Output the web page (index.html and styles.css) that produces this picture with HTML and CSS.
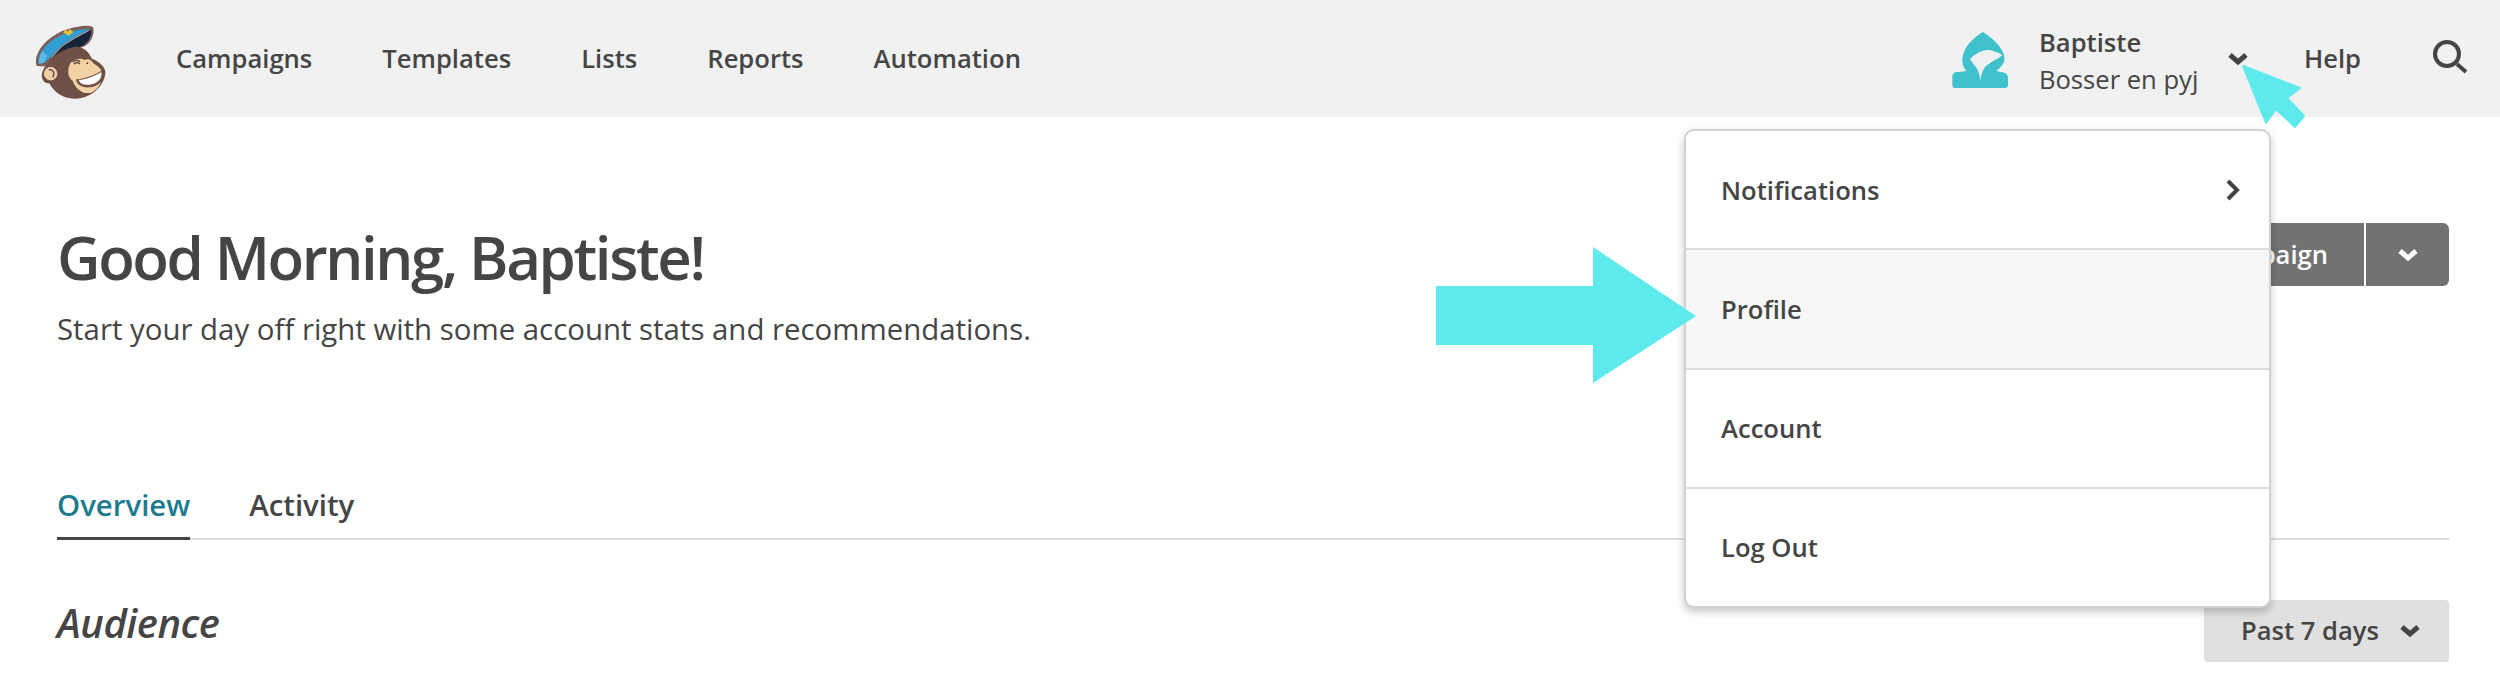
FILE: index.html
```html
<!DOCTYPE html>
<html lang="en">
<head>
<meta charset="utf-8">
<title>Mailchimp dashboard</title>
<link rel="stylesheet" href="styles.css">
</head>
<body>
<header class="topbar">
  <svg class="logo" viewBox="0 0 255 255" aria-label="Freddie logo">
    <path class="hat-edge" d="M20 138C8 100 50 50 105 30C140 18 180 12 190 22C194 50 180 76 150 84L60 140Z"/>
    <path class="hat-blue" d="M27 132C18 100 58 58 108 39C130 32 150 28 180 27L130 53L95 76L62 110L46 126Z"/>
    <path class="hat-light" d="M27 132C24 118 30 105 37 93L52 107L42 128Z"/>
    <path class="hat-dark" d="M62 120L96 80L132 57L184 29C186 50 174 68 156 78L90 108Z"/>
    <path class="hat-line" d="M64 112L96 78L132 55L176 32"/>
    <path class="hat-badge" d="M100 38L106 28L113 35L119 27L130 36L116 47L108 41Z"/>
    <path class="head" d="M50 134C66 106 106 82 140 80C164 80 178 100 186 116C206 124 226 140 226 156C226 190 190 236 134 236C98 236 72 216 58 190C34 190 26 160 50 134Z"/>
    <circle class="ear-cream" cx="62" cy="161" r="19"/>
    <path class="ear-line" d="M56 150C70 146 76 160 68 172"/>
    <path class="face" d="M120 132C128 116 150 112 164 120C176 114 186 122 190 130C202 138 214 146 214 154C218 176 212 206 184 218C158 224 136 206 128 182C112 174 112 146 120 132Z"/>
    <path class="eye" d="M128 126C134 118 146 120 150 126M132 132C138 126 146 128 150 132"/>
    <circle class="nose" cx="172" cy="130" r="3"/>
    <path class="mouth-edge" d="M138 178C160 178 200 164 222 146C228 176 210 198 180 202C158 204 140 196 138 178Z"/>
    <path class="teeth" d="M146 180C170 178 196 168 214 156C218 174 204 190 180 194C164 196 150 192 146 180Z"/>
  </svg>
  <nav class="mainnav">
    <a class="navlink">Campaigns</a>
    <a class="navlink">Templates</a>
    <a class="navlink">Lists</a>
    <a class="navlink">Reports</a>
    <a class="navlink">Automation</a>
  </nav>
  <svg class="hood" viewBox="0 0 240 225" aria-hidden="true">
    <path class="hood-fill" fill-rule="evenodd" d="M132 30C150 42 172 58 186 80C200 102 204 124 172 146C182 150 190 150 196 152C204 154 207 160 207 168L207 190C207 195 203 198 198 198L48 198C43 198 40 195 40 190L40 164C40 156 45 151 52 150C60 149 70 150 82 146C66 130 68 108 76 88C86 62 112 42 132 30ZM93 112C104 98 122 88 142 84C158 84 178 90 190 100C178 110 158 118 146 128C132 138 126 156 125 178C122 156 116 140 106 130C102 124 97 118 93 112Z"/>
  </svg>
  <div class="account">
    <span class="account-name">Baptiste</span>
    <span class="account-org">Bosser en pyj</span>
  </div>
  <svg class="account-chevron" viewBox="0 0 24 24" aria-hidden="true"><path d="M4 8L12 15L20 8"/></svg>
  <a class="navlink help">Help</a>
  <svg class="search" viewBox="0 0 70 60" aria-label="Search"><circle cx="47" cy="25" r="12"/><path d="M57 35L66 43"/></svg>
</header>

<main class="content">
  <section class="hero">
    <div>
      <h1 class="title">Good Morning, Baptiste!</h1>
      <p class="subtitle">Start your day off right with some account stats and recommendations.</p>
    </div>
    <div class="split">
      <button class="split-main">Create Campaign</button>
      <button class="split-caret"><svg class="white-chevron" viewBox="0 0 24 24" aria-hidden="true"><path d="M4 8L12 15L20 8"/></svg></button>
    </div>
  </section>
  <div class="tabs">
    <a class="tab tab-active">Overview</a>
    <a class="tab">Activity</a>
  </div>
  <section class="audience">
    <h2 class="audience-title">Audience</h2>
    <button class="range">Past 7 days<svg class="range-chevron" viewBox="0 0 24 24" aria-hidden="true"><path d="M4 8L12 15L20 8"/></svg></button>
  </section>
</main>

<div class="menu">
  <a class="menu-item">Notifications<svg class="menu-chevron" viewBox="0 0 14 22" aria-hidden="true"><path d="M2 2L11 11L2 20"/></svg></a>
  <a class="menu-item menu-item-hover">Profile</a>
  <a class="menu-item">Account</a>
  <a class="menu-item">Log Out</a>
</div>

<svg class="big-arrow" viewBox="0 0 260 136" aria-hidden="true"><path d="M0 39H157V0L260 69L157 136V98H0Z"/></svg>
<svg class="cursor" viewBox="0 0 110 100" aria-hidden="true"><path d="M33 36L90 58L77 68L94 86L85 97L66 79L56 93Z" stroke-linejoin="round"/></svg>
</body>
</html>
```
FILE: styles.css
```css
* { box-sizing: border-box; }
html, body { margin: 0; padding: 0; }
body {
  width: 2500px;
  height: 679px;
  overflow: hidden;
  position: relative;
  background: #fff;
  color: #454545;
  font-family: "Open Sans", "Liberation Sans", sans-serif;
}
.topbar {
  display: flex;
  align-items: center;
  height: 117px;
  padding: 0 30px;
  background: #f1f1f1;
}
.logo { width: 85px; height: 85px; flex: none; margin-top: 8px; }
.hat-edge { fill: #7d5f55; }
.hat-blue { fill: #2f9fd6; }
.hat-light { fill: #5cb8e4; }
.hat-dark { fill: #16263a; }
.hat-line { fill: none; stroke: #c8d4dc; stroke-width: 2; }
.hat-badge { fill: #f0c030; }
.head { fill: #6e5046; }
.ear-cream { fill: #f0cfa4; stroke: #fbe9d2; stroke-width: 2; }
.ear-line { fill: none; stroke: #6e5046; stroke-width: 4; }
.face { fill: #f3d2a4; }
.eye { fill: none; stroke: #5a4038; stroke-width: 4; }
.nose { fill: #5a4038; }
.mouth-edge { fill: #6e5046; }
.teeth { fill: #fff; }
.mainnav { display: flex; gap: 70px; margin-left: 61px; }
.navlink { font-size: 25.6px; font-weight: 600; color: #454545; }
.hood { width: 80px; height: 75px; flex: none; margin-left: auto; margin-top: 1px; }
.hood-fill { fill: #40c1ce; }
.account { display: flex; flex-direction: column; margin-left: 20px; margin-top: 5px; font-size: 25.6px; line-height: 37px; width: 159px; }
.account-name { font-weight: 600; }
.account-org { white-space: nowrap; }
.account-chevron { width: 24px; height: 24px; flex: none; margin-left: 28px; margin-top: 0; }
.account-chevron path, .range-chevron path { fill: none; stroke: #454545; stroke-width: 5; }
.help { margin-left: 54px; }
.search { width: 70px; height: 60px; flex: none; margin-left: 39px; }
.search circle, .search path { fill: none; stroke: #454545; stroke-width: 4; }
.content { padding: 0 51px 0 57px; }
.hero { display: flex; justify-content: space-between; align-items: flex-start; height: 368px; padding-top: 100px; }
.title { margin: 0 0 10px; font-size: 60px; line-height: 80px; font-weight: 600; letter-spacing: -2.4px; }
.subtitle { margin: 0; font-size: 29.4px; line-height: 44px; font-weight: 400; }
.split { display: flex; height: 63px; margin-top: 6px; }
.split-main { width: 280px; border: 0; padding: 0 36px 0 0; text-align: right; white-space: nowrap; background: #727272; color: #fff; font: 600 25.6px "Open Sans", sans-serif; border-radius: 6px 0 0 6px; }
.split-caret { width: 83px; margin-left: 2px; border: 0; padding: 0; background: #727272; border-radius: 0 6px 6px 0; display: flex; align-items: center; justify-content: center; }
.white-chevron { width: 24px; height: 24px; }
.white-chevron path { fill: none; stroke: #fff; stroke-width: 5; }
.tabs { display: flex; gap: 59px; height: 55px; border-bottom: 2px solid #dcdcdc; }
.tab { height: 55px; flex: none; font-size: 29.4px; line-height: 40px; font-weight: 600; border-bottom: 3px solid transparent; }
.tab-active { color: #1d7b90; border-bottom-color: #454545; }
.audience { display: flex; justify-content: space-between; align-items: center; margin-top: 55px; }
.audience-title { margin: 0; padding-bottom: 16px; font-size: 40px; font-weight: 600; font-style: italic; letter-spacing: -.5px; }
.range { display: flex; align-items: center; gap: 19px; height: 62px; width: 245px; padding: 0 0 0 37px; border: 0; border-radius: 4px; background: #e0e0e0; color: #454545; font: 600 25.6px "Open Sans", sans-serif; }
.range-chevron { width: 24px; height: 24px; }
.menu { position: absolute; left: 1684px; top: 129px; width: 587px; height: 479px; display: flex; flex-direction: column; background: #fff; border: 2px solid #d2d2d2; border-radius: 10px; box-shadow: 0 4px 8px rgba(0,0,0,.22); overflow: hidden; }
.menu-item { flex: 1; display: flex; align-items: center; justify-content: space-between; padding: 1px 29px 0 35px; font-size: 25.6px; font-weight: 600; border-bottom: 2px solid #dcdcdc; }
.menu-item:last-child { border-bottom: 0; }
.menu-item-hover { background: #f7f7f7; }
.menu-chevron { width: 14px; height: 22px; }
.menu-chevron path { fill: none; stroke: #454545; stroke-width: 4; }
.big-arrow { position: absolute; left: 1436px; top: 247px; width: 260px; height: 136px; }
.big-arrow path { fill: #5eeaec; }
.cursor { position: absolute; left: 2210px; top: 30px; width: 110px; height: 100px; }
.cursor path { fill: #5eeaec; stroke: #5eeaec; stroke-width: 2; }
```
